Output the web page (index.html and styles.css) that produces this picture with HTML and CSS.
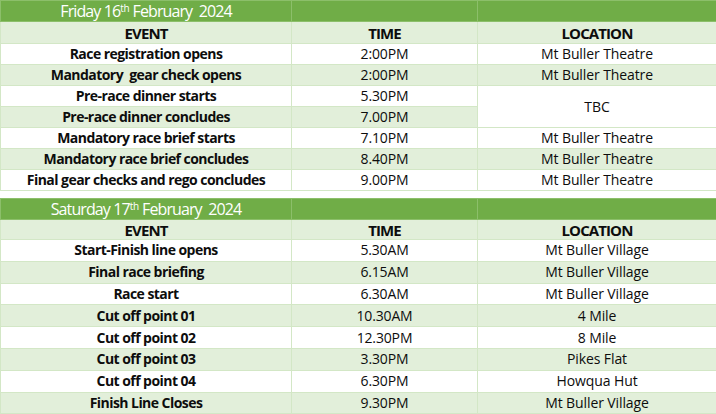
FILE: index.html
```html
<!DOCTYPE html>
<html>
<head>
<meta charset="utf-8">
<link rel="stylesheet" href="styles.css">
</head>
<body>
<div class="page">
  <table class="sched s1">
    <colgroup><col class="c1"><col class="c2"><col class="c3"></colgroup>
    <tr class="day"><td>Friday 16<sup>th</sup> February&nbsp; 2024</td><td></td><td></td></tr>
    <tr class="head g"><td>EVENT</td><td>TIME</td><td>LOCATION</td></tr>
    <tr><td class="ev">Race registration opens</td><td class="tm">2:00PM</td><td class="lc">Mt Buller Theatre</td></tr>
    <tr class="g"><td class="ev">Mandatory&nbsp; gear check opens</td><td class="tm">2:00PM</td><td class="lc">Mt Buller Theatre</td></tr>
    <tr><td class="ev">Pre-race dinner starts</td><td class="tm">5.30PM</td><td class="lc w" rowspan="2">TBC</td></tr>
    <tr class="g"><td class="ev">Pre-race dinner concludes</td><td class="tm">7.00PM</td></tr>
    <tr><td class="ev">Mandatory race brief starts</td><td class="tm">7.10PM</td><td class="lc">Mt Buller Theatre</td></tr>
    <tr class="g"><td class="ev">Mandatory race brief concludes</td><td class="tm">8.40PM</td><td class="lc">Mt Buller Theatre</td></tr>
    <tr><td class="ev">Final gear checks and rego concludes</td><td class="tm">9.00PM</td><td class="lc">Mt Buller Theatre</td></tr>
  </table>
  <table class="sched s2">
    <colgroup><col class="c1"><col class="c2"><col class="c3"></colgroup>
    <tr class="day"><td>Saturday 17<sup>th</sup> February&nbsp; 2024</td><td></td><td></td></tr>
    <tr class="head g"><td>EVENT</td><td>TIME</td><td>LOCATION</td></tr>
    <tr><td class="ev">Start-Finish line opens</td><td class="tm">5.30AM</td><td class="lc">Mt Buller Village</td></tr>
    <tr class="g"><td class="ev">Final race briefing</td><td class="tm">6.15AM</td><td class="lc">Mt Buller Village</td></tr>
    <tr><td class="ev">Race start</td><td class="tm">6.30AM</td><td class="lc">Mt Buller Village</td></tr>
    <tr class="g"><td class="ev">Cut off point 01</td><td class="tm">10.30AM</td><td class="lc">4 Mile</td></tr>
    <tr><td class="ev">Cut off point 02</td><td class="tm">12.30PM</td><td class="lc">8 Mile</td></tr>
    <tr class="g"><td class="ev">Cut off point 03</td><td class="tm">3.30PM</td><td class="lc">Pikes Flat</td></tr>
    <tr><td class="ev">Cut off point 04</td><td class="tm">6.30PM</td><td class="lc">Howqua Hut</td></tr>
    <tr class="g"><td class="ev">Finish Line Closes</td><td class="tm">9.30PM</td><td class="lc">Mt Buller Village</td></tr>
  </table>
</div>
</body>
</html>
```
FILE: styles.css
```css
html, body {
  margin: 0;
  padding: 0;
  background: #ffffff;
}
.page {
  width: 716px;
  display: flex;
  flex-direction: column;
  gap: 7px;
  font-family: "Open Sans", "DejaVu Sans", sans-serif;
  color: #0d0d0d;
}
.sched {
  width: 716px;
  border-collapse: collapse;
  table-layout: fixed;
}
.c1 { width: 291px; }
.c2 { width: 186px; }
.c3 { width: 239px; }
.sched td {
  border: 1px solid #d3e7c6;
  padding: 0;
  text-align: center;
  vertical-align: middle;
  font-size: 14px;
  line-height: 16px;
  white-space: nowrap;
  overflow: hidden;
}
.sched tr { height: 21px; }
.s1 tr.head { height: 22px; }
.s2 tr { height: 21.8px; }
.s2 tr.day { height: 21px; }
.s2 tr.head { height: 20px; }
.sched tr.g td { background: #e2efda; }
.sched td.w { background: #ffffff; }
.day td {
  background: #70ad47;
  color: #ffffff;
  font-size: 16px;
  font-weight: 500;
  letter-spacing: -0.9px;
  border-color: #8cbf6a;
}
.day sup {
  font-size: 10px;
  line-height: 0;
  vertical-align: 5px;
  letter-spacing: -0.3px;
}
.head td {
  font-weight: 700;
  letter-spacing: -0.9px;
  font-size: 15px;
}
.ev {
  font-weight: 700;
  letter-spacing: -0.55px;
  font-size: 15px;
}
.tm {
  letter-spacing: -0.15px;
  font-size: 15px;
}
.lc {
  letter-spacing: -0.1px;
  font-size: 15.5px;
}
```
